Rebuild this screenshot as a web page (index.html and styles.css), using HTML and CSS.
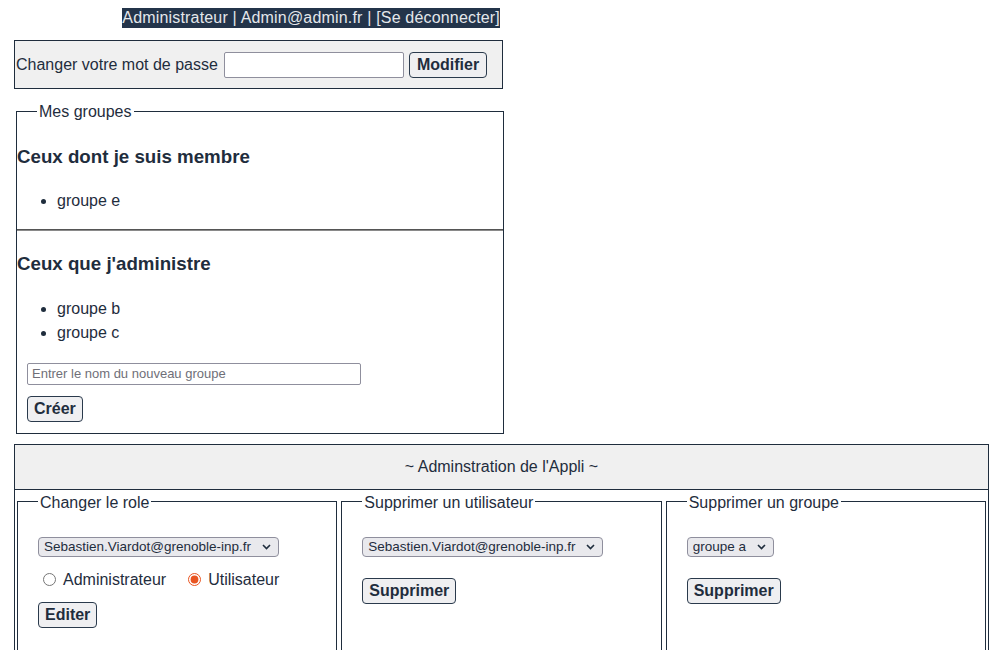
FILE: index.html
```html
<!DOCTYPE html>
<html lang="fr">
<head>
<meta charset="utf-8">
<title>Gestion</title>
<link rel="stylesheet" href="styles.css">
</head>
<body>
<header class="topbar"><span class="user">Administrateur | Admin@admin.fr | [Se déconnecter]</span></header>

<form class="pwd">
  <label class="pwd-label">Changer votre mot de passe</label>
  <input type="password" class="pwd-input">
  <button type="button" class="btn pwd-btn">Modifier</button>
</form>

<fieldset class="groups">
  <legend class="legend">Mes groupes</legend>
  <div class="grp">
    <h3 class="grp-title">Ceux dont je suis membre</h3>
    <ul class="grp-list"><li>groupe e</li></ul>
  </div>
  <hr class="sep">
  <div class="grp">
    <h3 class="grp-title">Ceux que j'administre</h3>
    <ul class="grp-list"><li>groupe b</li><li>groupe c</li></ul>
    <form class="new-group">
      <input type="text" class="new-input" placeholder="Entrer le nom du nouveau groupe">
      <button type="button" class="btn new-btn">Créer</button>
    </form>
  </div>
</fieldset>

<section class="admin">
  <div class="admin-title">~ Adminstration de l'Appli ~</div>
  <div class="admin-cols">
    <fieldset class="panel">
      <legend class="legend panel-legend">Changer le role</legend>
      <div class="sel-wrap">
        <select class="sel"><option>Sebastien.Viardot@grenoble-inp.fr</option></select>
        <svg class="chev" width="9" height="6" viewBox="0 0 9 6"><path d="M1 1 L4.5 4.5 L8 1" fill="none" stroke="#1f2d3d" stroke-width="1.6"/></svg>
      </div>
      <div class="radios">
        <label class="opt"><input type="radio" name="role" class="radio">Administrateur</label>
        <label class="opt opt2"><input type="radio" name="role" class="radio" checked>Utilisateur</label>
      </div>
      <button type="button" class="btn edit-btn">Editer</button>
    </fieldset>
    <fieldset class="panel">
      <legend class="legend panel-legend">Supprimer un utilisateur</legend>
      <div class="sel-wrap">
        <select class="sel"><option>Sebastien.Viardot@grenoble-inp.fr</option></select>
        <svg class="chev" width="9" height="6" viewBox="0 0 9 6"><path d="M1 1 L4.5 4.5 L8 1" fill="none" stroke="#1f2d3d" stroke-width="1.6"/></svg>
      </div>
      <button type="button" class="btn del-btn">Supprimer</button>
    </fieldset>
    <fieldset class="panel">
      <legend class="legend panel-legend">Supprimer un groupe</legend>
      <div class="sel-wrap">
        <select class="sel"><option>groupe a</option></select>
        <svg class="chev" width="9" height="6" viewBox="0 0 9 6"><path d="M1 1 L4.5 4.5 L8 1" fill="none" stroke="#1f2d3d" stroke-width="1.6"/></svg>
      </div>
      <button type="button" class="btn del-btn">Supprimer</button>
    </fieldset>
  </div>
</section>
</body>
</html>
```

FILE: styles.css
```css
* { box-sizing: border-box; }

body {
  margin: 8px;
  font-family: "Liberation Sans", Arial, sans-serif;
  font-size: 16px;
  line-height: 24px;
  color: #1f2d3d;
  background: #ffffff;
}

.topbar {
  width: 492px;
  height: 20px;
  text-align: right;
  line-height: 20px;
}

.user {
  display: inline-block;
  background: #23344a;
  color: #e4e7eb;
  line-height: 20px;
  height: 20px;
  letter-spacing: 0.18px;
}

.pwd {
  margin: 12px 0 0 6px;
  width: 489px;
  height: 49px;
  border: 1px solid #1f2d3d;
  background: #f0f0f0;
  display: flex;
  align-items: center;
  padding: 0 1px;
}

.pwd-input {
  margin-left: 6px;
  width: 180px;
  height: 26px;
  border: 1px solid #8f8f9d;
  border-radius: 2px;
  background: #fff;
}

.btn {
  font-family: "Liberation Sans", Arial, sans-serif;
  font-size: 16px;
  font-weight: bold;
  color: #1f2d3d;
  height: 26px;
  padding: 0 6px;
  border: 1px solid #2a3a4c;
  border-radius: 4px;
  background: #efeff1;
  line-height: 22px;
}

.pwd-btn { margin-left: 5px; padding: 0 7px; }

.groups {
  margin: 10px 0 0 8px;
  width: 488px;
  padding: 1px 0 0 0;
  border: 1px solid #1f2d3d;
  min-width: 0;
}

.legend {
  margin-left: 20px;
  padding: 0 2px;
  line-height: 24px;
  position: relative;
  top: 1px;
}

.panel-legend { margin-left: 0; }

.grp-title {
  font-size: 18.72px;
  font-weight: bold;
  line-height: 28px;
  margin: 18.72px 0;
}

.grp-list {
  margin: 16px 0;
  padding-left: 40px;
}

.sep {
  margin: 0;
  height: 0;
  border: none;
  border-top: 1px solid #555;
  border-bottom: 1px solid #8a8a8a;
}

.new-group {
  display: flex;
  flex-direction: column;
  align-items: flex-start;
  gap: 11px;
  padding: 2px 10px 11px;
}

.new-input {
  width: 334px;
  height: 22px;
  font-family: "Liberation Sans", Arial, sans-serif;
  font-size: 13px;
  border: 1px solid #8f8f9d;
  border-radius: 2px;
  padding: 0 4px;
}

.new-input::placeholder { color: #6f6f78; }

.admin {
  margin: 10px 0 0 6px;
  width: 975px;
  border: 1px solid #1f2d3d;
}

.admin-title {
  background: #f0f0f0;
  text-align: center;
  padding: 10px 0;
  line-height: 24px;
  border-bottom: 1px solid #1f2d3d;
}

.admin-cols {
  display: flex;
}

.panel {
  flex: 1;
  min-width: 0;
  margin: 0 2px;
  padding: 23px 20px 60px;
  border: 1px solid #1f2d3d;
}

.sel-wrap {
  position: relative;
  width: max-content;
  height: 20px;
}

.sel {
  display: block;
  appearance: none;
  -webkit-appearance: none;
  height: 20px;
  padding: 0 26px 0 5px;
  font-family: "Liberation Sans", Arial, sans-serif;
  font-size: 13.5px;
  color: #1f2d3d;
  background: #e9e9ed;
  border: 1px solid #8f8f9d;
  border-radius: 4px;
}

.chev {
  position: absolute;
  right: 8px;
  top: 7px;
  pointer-events: none;
}

.radios {
  display: flex;
  align-items: center;
  height: 24px;
  margin-top: 11px;
}

.opt {
  display: flex;
  align-items: center;
}

.opt2 { margin-left: 17px; }

.radio {
  margin: 0 7px 0 5px;
  width: 13px;
  height: 13px;
  accent-color: #e95420;
}

.edit-btn { display: block; margin-top: 10px; }
.del-btn { display: block; margin-top: 21px; }
```
